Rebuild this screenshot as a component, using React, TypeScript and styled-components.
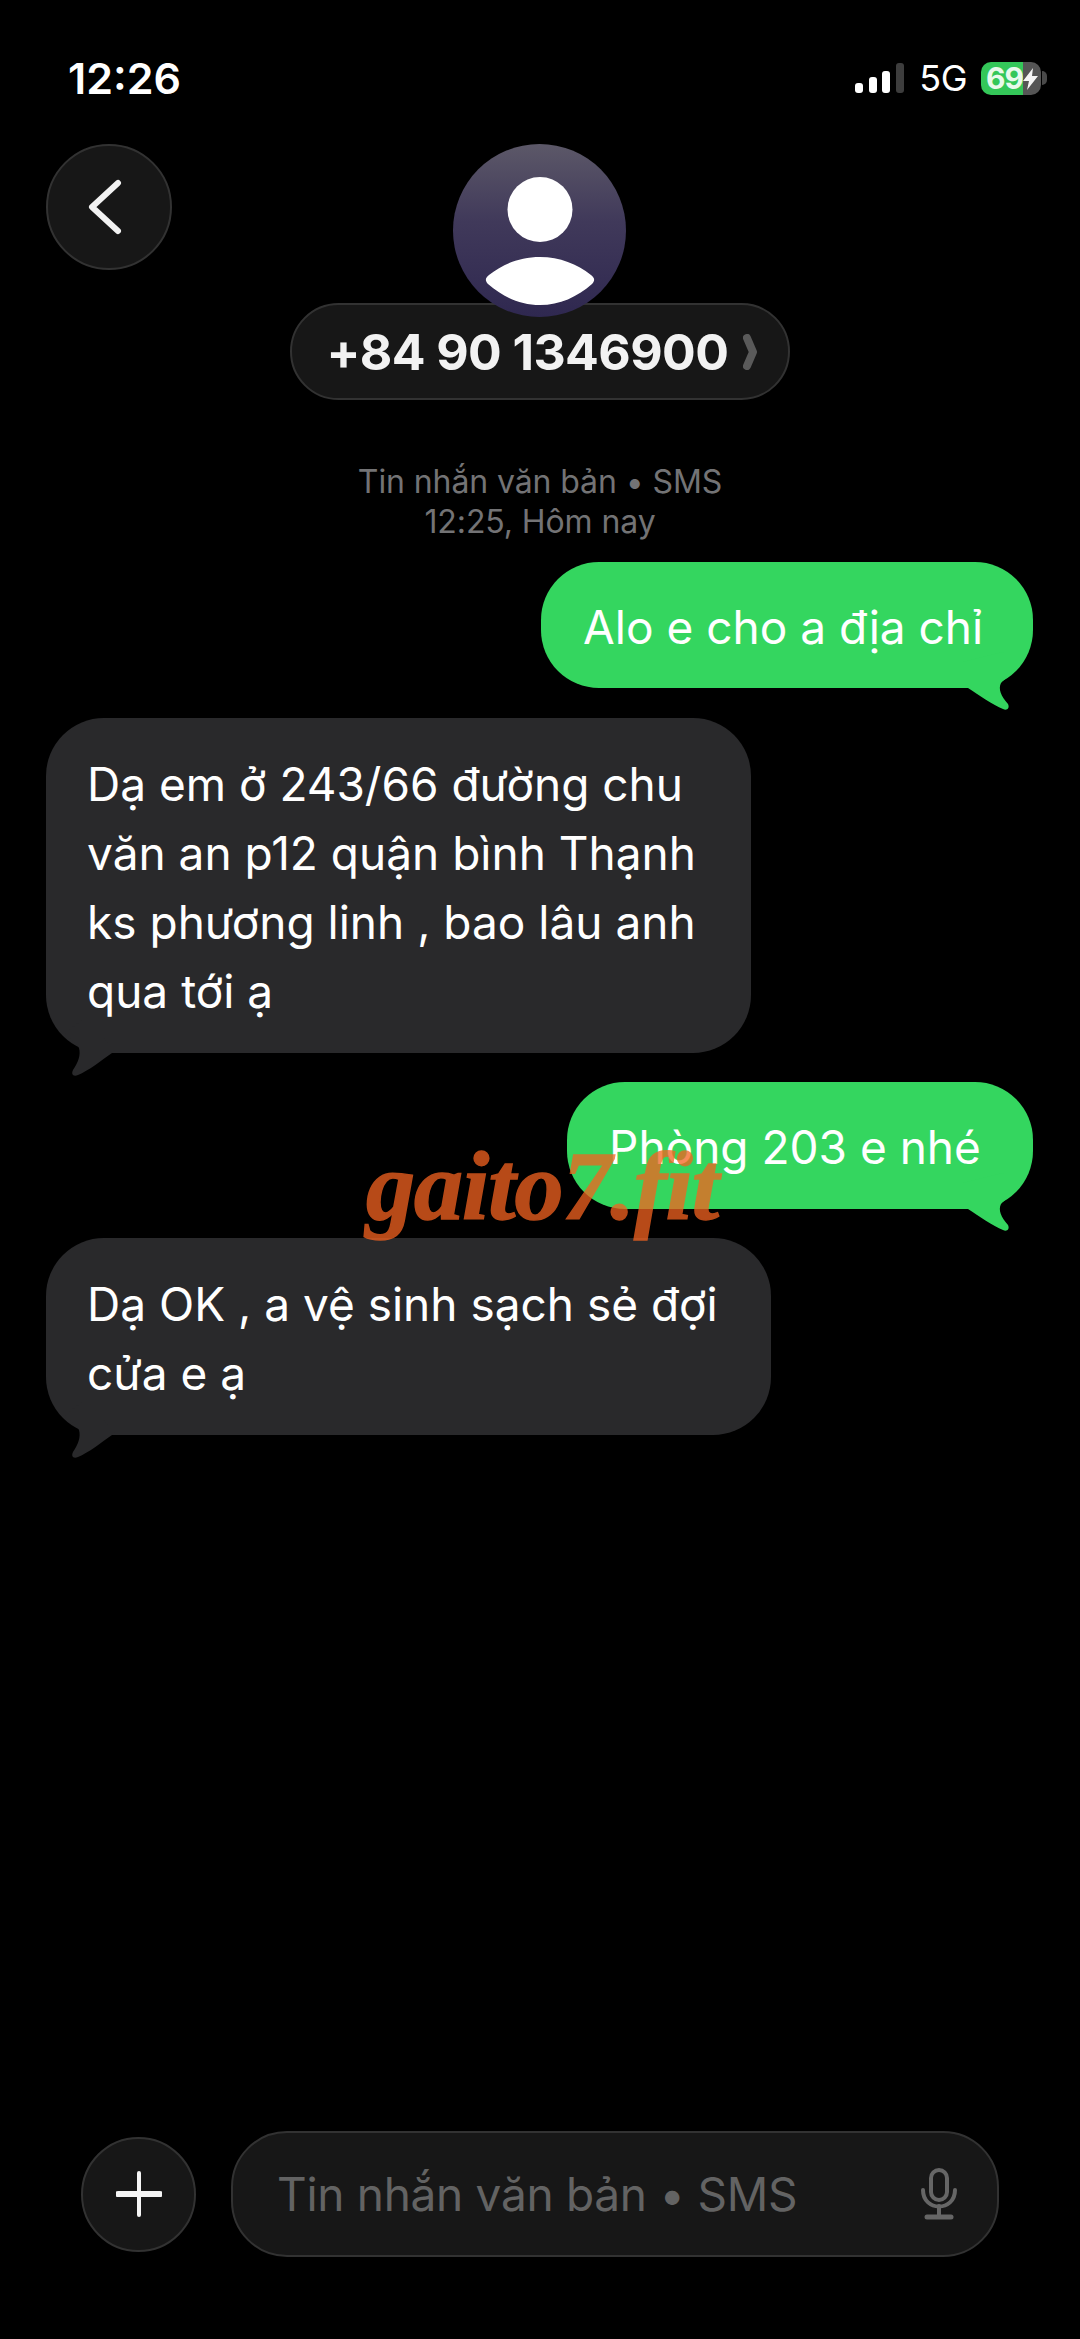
import React from "react";
import styled, { createGlobalStyle } from "styled-components";

const Global = createGlobalStyle`
  html, body { margin: 0; padding: 0; background: #000; }
  * { box-sizing: border-box; }
  body { font-family: Inter, "Noto Sans", "Liberation Sans", sans-serif; color: #fff; }
`;

const Screen = styled.div`
  position: relative;
  width: 1080px;
  height: 2339px;
  background: #000;
  display: flex;
  flex-direction: column;
  overflow: hidden;
`;

const StatusBar = styled.div`
  display: flex;
  align-items: center;
  justify-content: space-between;
  height: 34px;
  margin-top: 61px;
  padding: 0 33px 0 68px;
`;

const Clock = styled.span`
  font-size: 43px;
  font-weight: 600;
`;

const StatusIcons = styled.div`
  display: flex;
  align-items: center;
`;

const Network = styled.span`
  font-size: 36px;
  font-weight: 400;
  margin: 0 14px 0 15px;
  letter-spacing: -0.5px;
`;

const Battery = styled.div`
  position: relative;
  width: 60px;
  height: 33px;
  border-radius: 10px;
  overflow: hidden;
  background: linear-gradient(90deg, #34c759 0 42px, #555 42px);
  display: flex;
  align-items: center;
  padding-left: 5px;
  font-size: 30px;
  font-weight: 700;
  letter-spacing: -1px;
  color: #e9f9ec;
`;

const BatteryBolt = styled.svg`
  position: absolute;
  left: 42px;
  top: 6px;
`;

const BatteryNub = styled.div`
  width: 5px;
  height: 14px;
  margin-left: 1px;
  border-radius: 0 5px 5px 0;
  background: #4a4a4a;
`;

const Header = styled.div`
  display: grid;
  grid-template-columns: 1fr auto 1fr;
  align-items: start;
  margin-top: 49px;
  padding: 0 46px;
`;

const RoundButton = styled.div<{ $size: number }>`
  width: ${(p) => p.$size}px;
  height: ${(p) => p.$size}px;
  border-radius: 50%;
  background: #171717;
  border: 2px solid #323232;
  display: flex;
  align-items: center;
  justify-content: center;
  flex: none;
`;

const BackChevron = styled.svg`
  margin-right: 8px;
`;

const Contact = styled.div`
  display: flex;
  flex-direction: column;
  align-items: center;
  margin-left: -1px;
`;

const Avatar = styled.div`
  position: relative;
  z-index: 1;
  width: 173px;
  height: 173px;
  margin-bottom: -14px;
  border-radius: 50%;
  overflow: hidden;
  background: linear-gradient(180deg, #5c5868 0%, #40395a 45%, #2f2850 100%);
`;

const NamePill = styled.div`
  width: 500px;
  height: 97px;
  padding: 0 0 0 35px;
  border-radius: 49px;
  background: #171717;
  border: 2px solid #323232;
  display: flex;
  align-items: center;
  gap: 15px;
`;

const PhoneNumber = styled.span`
  font-size: 50px;
  font-weight: 700;
  letter-spacing: -0.6px;
  color: #f2f2f2;
  white-space: nowrap;
`;

const Meta = styled.div`
  margin-top: 62px;
  text-align: center;
  font-size: 32px;
  line-height: 40px;
  font-weight: 400;
  letter-spacing: -0.1px;
  color: #737375;
`;

const Thread = styled.div`
  display: flex;
  flex-direction: column;
  margin-top: 20px;
  padding: 0 47px 0 46px;
`;

const Bubble = styled.div<{ $out?: boolean; $w: number; $h: number; $top: number }>`
  position: relative;
  width: ${(p) => p.$w}px;
  height: ${(p) => p.$h}px;
  margin-top: ${(p) => p.$top}px;
  align-self: ${(p) => (p.$out ? "flex-end" : "flex-start")};
  padding: 4px 30px 0 ${(p) => (p.$out ? 42 : 41)}px;
  border-radius: 58px;
  background: ${(p) => (p.$out ? "#34d65f" : "#29292b")};
  display: flex;
  flex-direction: column;
  justify-content: center;
  font-size: 46px;
  line-height: 69px;
  font-weight: 400;
  white-space: nowrap;
`;

const Tail = styled.svg<{ $out?: boolean }>`
  position: absolute;
  bottom: -24px;
  ${(p) => (p.$out ? "right: 0;" : "left: 0;")}
`;

const Watermark = styled.div`
  position: absolute;
  left: 366px;
  top: 1131px;
  font-family: "Liberation Serif", "DejaVu Serif", serif;
  font-style: italic;
  font-weight: 700;
  font-size: 98px;
  line-height: 110px;
  letter-spacing: -1px;
  color: #f56320;
  -webkit-text-stroke: 1.5px #f56320;
  opacity: 0.75;
  white-space: nowrap;
`;

const Composer = styled.div`
  display: flex;
  align-items: center;
  gap: 35px;
  margin-top: auto;
  margin-bottom: 82px;
  padding: 0 81px;
`;

const InputField = styled.div`
  flex: 1;
  height: 126px;
  border-radius: 56px;
  background: #171717;
  border: 2px solid #323232;
  display: flex;
  align-items: center;
  justify-content: space-between;
  padding: 0 40px 0 44px;
  font-size: 46px;
  letter-spacing: -0.3px;
  color: #636363;
`;

const BubbleTail = ({ out }: { out?: boolean }) =>
  out ? (
    <Tail $out width="70" height="70" viewBox="0 0 70 70" fill="#34d65f">
      <path d="M0 20 V46 H5 C16 53 30 63 40 67 C44 69 47 66 45 62 C38 54 35 47 38 41 C42 36 50 32 55 26 L40 10 Z" />
    </Tail>
  ) : (
    <Tail width="70" height="70" viewBox="0 0 70 70" fill="#29292b">
      <path d="M70 46 H66 C56 53 42 64 32 68 C27 70 25 67 27 63 C32 56 35 48 33 41 C30 35 24 32 19 26 L40 10 Z" />
    </Tail>
  );

export default function App() {
  return (
    <Screen>
      <Global />
      <StatusBar>
        <Clock>12:26</Clock>
        <StatusIcons>
          <svg width="49" height="30" viewBox="0 0 49 30">
            <rect x="0" y="20" width="8" height="10" rx="3" fill="#fff" />
            <rect x="14" y="14" width="8" height="16" rx="3" fill="#fff" />
            <rect x="27" y="8" width="8" height="22" rx="3" fill="#fff" />
            <rect x="41" y="0" width="8" height="30" rx="3" fill="#3d3d3d" />
          </svg>
          <Network>5G</Network>
          <Battery>
            69
            <BatteryBolt width="16" height="22" viewBox="0 0 16 22" fill="#f5f5f5">
              <path d="M10 0 L0 13 H6 L4 22 L15 8 H9 Z" />
            </BatteryBolt>
          </Battery>
          <BatteryNub />
        </StatusIcons>
      </StatusBar>

      <Header>
        <RoundButton $size={126}>
          <BackChevron width="34" height="56" viewBox="0 0 34 56" fill="none" stroke="#f2f2f2" strokeWidth="6" strokeLinecap="round" strokeLinejoin="round">
            <path d="M30 4 L4 28 L30 52" />
          </BackChevron>
        </RoundButton>
        <Contact>
          <Avatar>
            <svg width="173" height="173" viewBox="0 0 173 173" fill="#fff">
              <circle cx="87" cy="65.5" r="32.5" />
              <path d="M36 131 C50 120 67 113 87 113 C107 113 124 120 138 131 C142 134 142 137 139 140 C124 153 107 161 87 161 C67 161 50 153 35 140 C32 137 32 134 36 131 Z" />
            </svg>
          </Avatar>
          <NamePill>
            <PhoneNumber>+84 90 1346900</PhoneNumber>
            <svg width="15" height="36" viewBox="0 0 15 36" fill="none" stroke="#5a5a5a" strokeWidth="8" strokeLinecap="round" strokeLinejoin="round">
              <path d="M4 4 L10 18 L4 32" />
            </svg>
          </NamePill>
        </Contact>
        <div />
      </Header>

      <Meta>
        <div>Tin nhắn văn bản • SMS</div>
        <div>12:25, Hôm nay</div>
      </Meta>

      <Thread>
        <Bubble $out $w={492} $h={126} $top={0}>
          Alo e cho a địa chỉ
          <BubbleTail out />
        </Bubble>
        <Bubble $w={705} $h={335} $top={30}>
          <div>Dạ em ở 243/66 đường chu</div>
          <div>văn an p12 quận bình Thạnh</div>
          <div>ks phương linh , bao lâu anh</div>
          <div>qua tới ạ</div>
          <BubbleTail />
        </Bubble>
        <Bubble $out $w={466} $h={127} $top={29}>
          Phòng 203 e nhé
          <BubbleTail out />
        </Bubble>
        <Bubble $w={725} $h={197} $top={29}>
          <div>Dạ OK , a vệ sinh sạch sẻ đợi</div>
          <div>cửa e ạ</div>
          <BubbleTail />
        </Bubble>
      </Thread>

      <Watermark>gaito7.fit</Watermark>

      <Composer>
        <RoundButton $size={115}>
          <svg width="46" height="46" viewBox="0 0 46 46" stroke="#f5f5f5" strokeLinecap="round">
            <path d="M23 2 V44" strokeWidth="4" />
            <path d="M2 23 H44" strokeWidth="6" />
          </svg>
        </RoundButton>
        <InputField>
          <span>Tin nhắn văn bản • SMS</span>
          <svg width="36" height="52" viewBox="0 0 36 52" fill="none" stroke="#666" strokeWidth="4" strokeLinecap="round">
            <rect x="10" y="2" width="16" height="30" rx="8" />
            <path d="M2 22 C2 44 34 44 34 22" />
            <path d="M18 38 V48" />
            <path d="M6 49 H30" strokeWidth="5" />
          </svg>
        </InputField>
      </Composer>
    </Screen>
  );
}
